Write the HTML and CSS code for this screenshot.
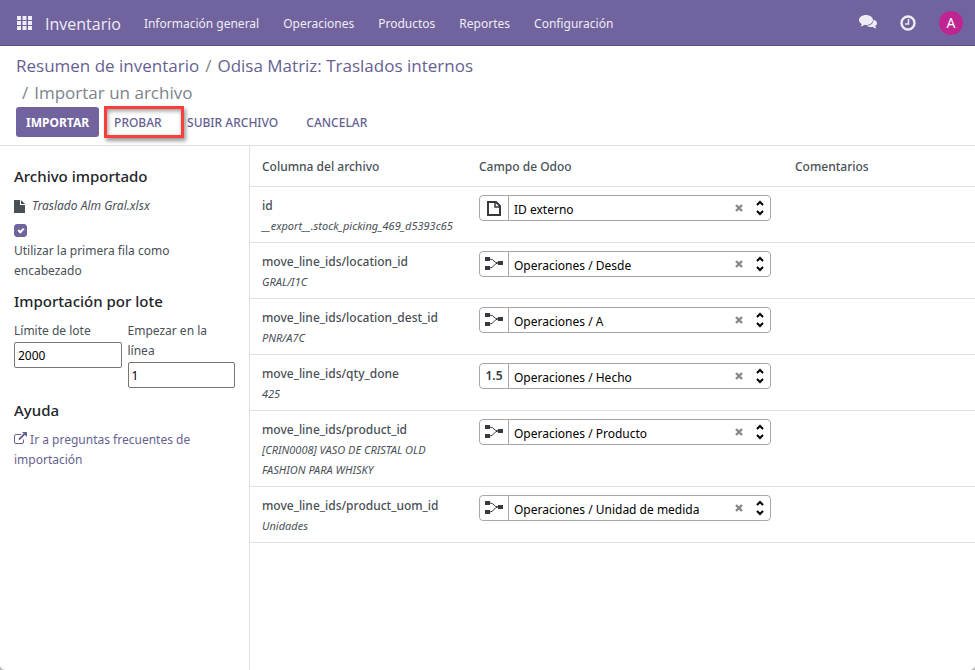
FILE: index.html
```html
<!DOCTYPE html>
<html lang="es">

<head>
  <meta charset="UTF-8">
  <meta name="viewport" content="width=device-width, initial-scale=1.0">
  <title>Importar un archivo - Inventario</title>
  <link rel="stylesheet" href="styles.css">
</head>

<body>
  <!-- icons -->
  <svg class="defs" width="0" height="0" aria-hidden="true">
    <symbol id="i-rel" viewBox="0 0 18 14">
      <path d="M0 0h5v4H0zM0 9h5v4H0zM13 4h5v4h-5z" fill="#343a40" />
      <path d="M5 2c4 0 4 4 8 4M5 11c4 0 4-5 8-5" fill="none" stroke="#343a40" />
    </symbol>
    <symbol id="i-file" viewBox="0 0 14 15">
      <path d="M1 1h8l4 4v9H1z" fill="none" stroke="#343a40" stroke-width="2" />
      <path d="M8 1v5h5" fill="none" stroke="#343a40" stroke-width="1.5" />
    </symbol>
    <symbol id="i-times" viewBox="0 0 8 8">
      <path d="M1 1l6 6M7 1L1 7" stroke="#888" stroke-width="2.4" />
    </symbol>
    <symbol id="i-sort" viewBox="0 0 8 16">
      <path d="M1 5l3-3 3 3M1 11l3 3 3-3" fill="none" stroke="#000" stroke-width="2" />
    </symbol>
  </svg>

  <div class="app">
    <header class="navbar">
      <button class="apps" aria-label="Aplicaciones">
        <svg width="15" height="14" viewBox="0 0 15 14" fill="currentColor">
          <path d="M0 0h4v4H0zM5.500 0h4v4h-4zM11 0h4v4h-4zM0 5h4v4H0zM5.500 5h4v4h-4zM11 5h4v4h-4zM0 10h4v4H0zM5.500 10h4v4h-4zM11 10h4v4h-4z" />
        </svg>
      </button>
      <a href="#" class="brand">Inventario</a>
      <nav class="menu">
        <a href="#">Información general</a>
        <a href="#">Operaciones</a>
        <a href="#">Productos</a>
        <a href="#">Reportes</a>
        <a href="#">Configuración</a>
      </nav>
      <div class="systray">
        <button aria-label="Conversaciones">
          <svg width="18" height="15" viewBox="0 0 18 15" fill="currentColor">
            <path d="M14.500 4.500C16.600 5.200 18 6.500 18 8.200c0 1.200-.7 2.200-1.800 2.900.2.900.7 1.500 1.300 2.200-1.500 0-2.800-.5-3.700-1.300-2.200.3-4.700-.1-6.200-1.300 4 0 7-2.400 6.900-6.200z" />
            <path d="M7 0c3.900 0 7 2.200 7 5s-3.100 5-7 5c-.6 0-1.200 0-1.700-.2C4.200 10.700 2.800 11.500 1.400 11.500c.7-.8 1.200-1.500 1.400-2.500C1.100 8.100 0 6.700 0 5c0-2.800 3.100-5 7-5z" />
          </svg>
        </button>
        <button aria-label="Actividades">
          <svg width="16" height="16" viewBox="0 0 16 16" fill="none" stroke="currentColor">
            <circle cx="8" cy="8" r="6.500" stroke-width="2.400" />
            <path d="M8.500 4v5H5" stroke-width="1.500" />
          </svg>
        </button>
        <button class="avatar" aria-label="Usuario">A</button>
      </div>
    </header>

    <div class="control-panel">
      <ol class="breadcrumb">
        <li><a href="#">Resumen de inventario</a></li>
        <li><a href="#">Odisa Matriz: Traslados internos</a></li>
        <li class="active">Importar un archivo</li>
      </ol>
      <div class="actions">
        <button class="btn btn-primary">IMPORTAR</button>
        <button class="btn marked">PROBAR</button>
        <button class="btn">SUBIR ARCHIVO</button>
        <button class="btn">CANCELAR</button>
      </div>
    </div>

    <main class="content">
      <aside class="sidebar">
        <h4>Archivo importado</h4>
        <p class="filename">
          <svg width="11" height="13" viewBox="0 0 11 13" fill="#495057">
            <path d="M0 0h6v5h5v8H0zM7 0l4 4H7z" />
          </svg>
          <em>Traslado Alm Gral.xlsx</em>
        </p>
        <div class="check">
          <input type="checkbox" id="headers" checked>
          <label for="headers">Utilizar la primera fila como encabezado</label>
        </div>

        <h4>Importación por lote</h4>
        <div class="batch">
          <div>
            <label for="limit">Límite de lote</label>
            <input type="text" id="limit" value="2000">
          </div>
          <div>
            <label for="start">Empezar en la línea</label>
            <input type="text" id="start" value="1">
          </div>
        </div>

        <h4>Ayuda</h4>
        <a href="#" class="help">
          <svg width="13" height="12" viewBox="0 0 13 12" fill="none" stroke="currentColor">
            <path d="M7 2.500H2a1.500 1.500 0 0 0-1.500 1.500v6A1.500 1.500 0 0 0 2 11.500h6A1.500 1.500 0 0 0 9.500 10V7.500" />
            <path d="M5 7.500l6-6" stroke-width="1.800" />
            <path d="M8 0h5v5z" fill="currentColor" stroke="none" />
          </svg>
          Ir a preguntas frecuentes de importación</a>
      </aside>

      <table class="mapping">
        <thead>
          <tr>
            <th class="col-file">Columna del archivo</th>
            <th class="col-field">Campo de Odoo</th>
            <th>Comentarios</th>
          </tr>
        </thead>
        <tbody>
          <tr>
            <td>
              <div class="name">id</div>
              <div class="sample">__export__.stock_picking_469_d5393c65</div>
            </td>
            <td>
              <div class="field">
                <span class="type"><svg width="14" height="15"><use href="#i-file" /></svg></span>
                <select aria-label="id"><option>ID externo</option></select>
                <button aria-label="Quitar"><svg width="8" height="8"><use href="#i-times" /></svg></button>
                <svg class="sort" width="8" height="16"><use href="#i-sort" /></svg>
              </div>
            </td>
            <td></td>
          </tr>
          <tr>
            <td>
              <div class="name">move_line_ids/location_id</div>
              <div class="sample">GRAL/I1C</div>
            </td>
            <td>
              <div class="field">
                <span class="type"><svg width="18" height="14"><use href="#i-rel" /></svg></span>
                <select aria-label="move_line_ids/location_id"><option>Operaciones / Desde</option></select>
                <button aria-label="Quitar"><svg width="8" height="8"><use href="#i-times" /></svg></button>
                <svg class="sort" width="8" height="16"><use href="#i-sort" /></svg>
              </div>
            </td>
            <td></td>
          </tr>
          <tr>
            <td>
              <div class="name">move_line_ids/location_dest_id</div>
              <div class="sample">PNR/A7C</div>
            </td>
            <td>
              <div class="field">
                <span class="type"><svg width="18" height="14"><use href="#i-rel" /></svg></span>
                <select aria-label="move_line_ids/location_dest_id"><option>Operaciones / A</option></select>
                <button aria-label="Quitar"><svg width="8" height="8"><use href="#i-times" /></svg></button>
                <svg class="sort" width="8" height="16"><use href="#i-sort" /></svg>
              </div>
            </td>
            <td></td>
          </tr>
          <tr>
            <td>
              <div class="name">move_line_ids/qty_done</div>
              <div class="sample">425</div>
            </td>
            <td>
              <div class="field">
                <span class="type">1.5</span>
                <select aria-label="move_line_ids/qty_done"><option>Operaciones / Hecho</option></select>
                <button aria-label="Quitar"><svg width="8" height="8"><use href="#i-times" /></svg></button>
                <svg class="sort" width="8" height="16"><use href="#i-sort" /></svg>
              </div>
            </td>
            <td></td>
          </tr>
          <tr>
            <td>
              <div class="name">move_line_ids/product_id</div>
              <div class="sample">[CRIN0008] VASO DE CRISTAL OLD FASHION PARA WHISKY</div>
            </td>
            <td>
              <div class="field">
                <span class="type"><svg width="18" height="14"><use href="#i-rel" /></svg></span>
                <select aria-label="move_line_ids/product_id"><option>Operaciones / Producto</option></select>
                <button aria-label="Quitar"><svg width="8" height="8"><use href="#i-times" /></svg></button>
                <svg class="sort" width="8" height="16"><use href="#i-sort" /></svg>
              </div>
            </td>
            <td></td>
          </tr>
          <tr>
            <td>
              <div class="name">move_line_ids/product_uom_id</div>
              <div class="sample">Unidades</div>
            </td>
            <td>
              <div class="field">
                <span class="type"><svg width="18" height="14"><use href="#i-rel" /></svg></span>
                <select aria-label="move_line_ids/product_uom_id"><option>Operaciones / Unidad de medida</option></select>
                <button aria-label="Quitar"><svg width="8" height="8"><use href="#i-times" /></svg></button>
                <svg class="sort" width="8" height="16"><use href="#i-sort" /></svg>
              </div>
            </td>
            <td></td>
          </tr>
        </tbody>
      </table>
    </main>
  </div>
</body>

</html>
```
FILE: styles.css
```css
* {
  box-sizing: border-box;
}

html {
  background: #b5b5b5;
}

body {
  margin: 0;
  font-family: "Noto Sans", "Open Sans", sans-serif;
  font-size: 12px;
  line-height: 20px;
  color: #495057;
}

button,
input,
select {
  font-family: inherit;
  font-size: inherit;
}

button {
  padding: 0;
  border: 0;
  background: none;
  color: inherit;
  cursor: pointer;
}

a {
  color: #665f92;
  text-decoration: none;
}

svg {
  display: block;
}

.defs {
  position: absolute;
}

.app {
  display: flex;
  flex-direction: column;
  min-height: 100vh;
  background: #fff;
  border-radius: 0 0 5px 5px;
  overflow: hidden;
}

/* navbar */
.navbar {
  display: flex;
  align-items: center;
  height: 46px;
  padding: 0 12px 0 17px;
  background: #71639e;
  border-bottom: 1px solid #5a4f7f;
  color: #eeecf4;
}

.navbar a {
  color: inherit;
}

.brand {
  margin: 0 23px 0 13px;
  padding-top: 2px;
  font-family: "Open Sans", sans-serif;
  font-size: 16px;
}

.menu {
  display: flex;
  gap: 24px;
  padding-top: 2px;
}

.systray {
  display: flex;
  align-items: center;
  gap: 23px;
  margin-left: auto;
}

.systray .avatar {
  width: 24px;
  height: 24px;
  border-radius: 50%;
  background: #bf2590;
  color: #fff;
  font-size: 14px;
}

/* control panel */
.control-panel {
  padding: 6px 16px 7px;
  border-bottom: 1px solid #dee2e6;
}

.breadcrumb {
  display: flex;
  flex-wrap: wrap;
  max-width: 470px;
  margin: 0;
  padding: 0;
  list-style: none;
  font-family: "Open Sans", sans-serif;
  font-size: 17px;
  line-height: 27px;
}

.breadcrumb li + li::before {
  content: "/";
  padding: 0 6px;
  color: #7c848b;
}

.breadcrumb .active {
  color: #7c848b;
}

.actions {
  display: flex;
  align-items: center;
}

.btn {
  height: 30px;
  padding: 0 10px;
  border-radius: 3px;
  color: #665f92;
  font-weight: 500;
}

.btn + .btn {
  margin-left: 8px;
}

.btn-primary {
  background: #71639e;
  color: #fff;
  font-weight: 700;
}

.actions .marked {
  width: 80px;
  height: 32px;
  margin: 0 -15px 0 5px;
  padding: 0 7px;
  border: 3px solid #f93e3e;
  border-radius: 0;
  box-shadow: 2px 3px 4px rgba(0, 0, 0, 0.4), inset 1px 2px 4px rgba(0, 0, 0, 0.4);
  text-align: left;
}

/* content */
.content {
  display: flex;
  flex: 1;
  align-items: stretch;
}

.sidebar {
  flex: 0 0 250px;
  padding: 20px 14px;
  border-right: 1px solid #dee2e6;
}

.sidebar h4 {
  margin: 0 0 10px;
  color: #212529;
  font-size: 15px;
  font-weight: 500;
}

.filename {
  display: flex;
  align-items: center;
  gap: 7px;
  margin: 0 0 8px;
}

.check {
  margin-bottom: 10px;
}

.check input {
  display: grid;
  place-items: center;
  width: 13px;
  height: 13px;
  margin: 0 0 4px;
  appearance: none;
  border: 1px solid #71639e;
  border-radius: 3px;
}

.check input:checked {
  background: #71639e;
}

.check input:checked::before {
  content: "";
  box-sizing: content-box;
  width: 4px;
  height: 2px;
  margin-bottom: 2px;
  border: solid #fff;
  border-width: 0 0 2px 2px;
  transform: rotate(-45deg);
}

.check label {
  display: block;
  max-width: 180px;
}

.batch {
  display: flex;
  align-items: flex-start;
  gap: 6px;
  margin-bottom: 12px;
}

.batch > div {
  flex: 1;
}

.batch label {
  display: block;
}

.batch input {
  display: block;
  width: 100%;
  height: 26px;
  margin-top: 1px;
  padding: 1px 3px;
  border: 1px solid #767676;
  border-radius: 2px;
  color: #000;
}

.help svg {
  display: inline-block;
}

.mapping {
  flex: 1;
  width: 100%;
  align-self: flex-start;
  table-layout: fixed;
  border-collapse: collapse;
}

.mapping th,
.mapping td {
  padding: 8px 12px 7px;
  border-bottom: 1px solid #dee2e6;
  text-align: left;
  vertical-align: top;
}

.mapping td:first-child {
  padding: 9px 12px 6px;
}

.mapping th {
  padding: 11px 12px 9px;
  font-weight: 500;
}

.mapping .col-file {
  width: 217px;
}

.mapping .col-field {
  width: 316px;
}

.name {
  font-weight: 500;
}

.sample {
  font-size: 11px;
  font-style: italic;
}

.field {
  display: flex;
  align-items: center;
  height: 26px;
  border: 1px solid #a8a8a8;
  border-radius: 4px;
  padding-right: 6px;
}

.type {
  display: flex;
  align-items: center;
  justify-content: center;
  align-self: stretch;
  width: 29px;
  border-right: 1px solid #a8a8a8;
  color: #343a40;
  font-weight: 600;
}

.field select {
  flex: 1;
  min-width: 0;
  padding: 2px 5px 0;
  border: 0;
  background: none;
  appearance: none;
  color: #000;
}

.sort {
  margin-left: 13px;
}
```
